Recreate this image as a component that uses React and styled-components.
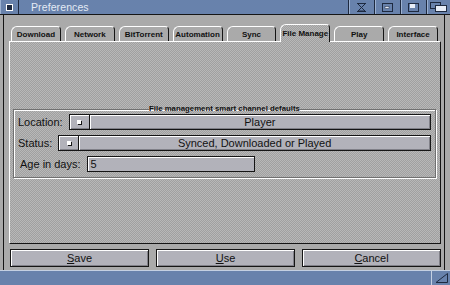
import React from "react";
import styled, { createGlobalStyle } from "styled-components";

const GRAY = "#aaaaaa";
const FACE = "#b2b2ba";
const BLUE = "#6882ac";
const DARK = "#151515";
const SHADOW = "#707070";
const SHINE = "#ffffff";
const DITHER = `repeating-conic-gradient(#a0a0a0 0 25%, #b8b8b8 0 50%) 0 0 / 2px 2px`;

const GlobalStyle = createGlobalStyle`
  html, body { margin: 0; padding: 0; background: ${GRAY}; }
  body { font-family: "Liberation Sans", Arial, sans-serif; }
`;

const Window = styled.div`
  width: 450px;
  height: 285px;
  display: flex;
  flex-direction: column;
  background: ${GRAY};
  overflow: hidden;
`;

const TitleBar = styled.div`
  height: 14px;
  display: flex;
  align-items: stretch;
  background: ${BLUE};
  border-bottom: 1px solid ${DARK};
`;

const Gadget = styled.div`
  width: ${(p) => p.$w}px;
  display: flex;
  align-items: center;
  justify-content: center;
  border-left: ${(p) => (p.$first ? "none" : `1px solid #1e2a40`)};
  border-right: ${(p) => (p.$first ? `1px solid #1e2a40` : "none")};
  box-shadow: inset 1px 0 0 #9db2d2;
`;

const Title = styled.div`
  flex: 1;
  padding-left: 12px;
  font-size: 10.5px;
  line-height: 14px;
  color: #e4ebf5;
  letter-spacing: 0.1px;
`;

const Body = styled.div`
  flex: 1;
  display: flex;
  min-height: 0;
`;

const SideBorder = styled.div`
  width: ${(p) => p.$w}px;
  background: ${GRAY};
  border-${(p) => (p.$right ? "left" : "right")}: 1px solid ${DARK};
`;

const Inner = styled.div`
  flex: 1;
  display: flex;
  flex-direction: column;
  padding: 10px 3px 3px 5px;
  background: ${GRAY};
  min-width: 0;
`;

const TabRow = styled.div`
  height: 16px;
  display: flex;
  align-items: flex-end;
  gap: 4px;
  padding: 0 3px 0 2px;
  position: relative;
  z-index: 1;
`;

const Tab = styled.div`
  flex: 1;
  height: ${(p) => (p.$active ? 18 : 15)}px;
  margin-bottom: ${(p) => (p.$active ? -1 : 0)}px;
  box-sizing: border-box;
  border-top: 1px solid ${SHINE};
  border-left: 1px solid ${SHINE};
  border-right: 1px solid ${DARK};
  border-radius: 6px 4px 0 0;
  background: ${(p) => (p.$active ? DITHER : GRAY)};
  display: flex;
  align-items: center;
  justify-content: center;
  font-size: 8px;
  font-weight: bold;
  color: #111;
  white-space: nowrap;
  overflow: hidden;
  padding-top: ${(p) => (p.$active ? 0 : 1)}px;
`;

const Panel = styled.div`
  flex: 1;
  display: flex;
  flex-direction: column;
  justify-content: center;
  background: ${DITHER};
  border-top: 1px solid ${SHINE};
  border-left: 1px solid ${SHINE};
  border-right: 1px solid ${DARK};
  border-bottom: 1px solid ${DARK};
  padding: 0 4px 2px 3px;
`;

const Group = styled.fieldset`
  margin: 0;
  padding: 1px 4px 5px 4px;
  border: 1px solid ${SHADOW};
  box-shadow: inset 1px 1px 0 ${SHINE}, 1px 1px 0 ${SHINE};
  display: flex;
  flex-direction: column;
  gap: 5px;
  min-width: 0;
`;

const Legend = styled.legend`
  margin: 0 auto;
  padding: 0;
  font-size: 7.8px;
  font-weight: bold;
  color: #111;
  line-height: 8px;
`;

const Row = styled.div`
  display: flex;
  align-items: center;
  height: 16px;
  padding-left: ${(p) => p.$indent || 0}px;
`;

const Label = styled.span`
  font-size: 11px;
  color: #111;
  margin-right: 6px;
`;

const Cycle = styled.div`
  flex: 1;
  height: 16px;
  box-sizing: border-box;
  border: 1px solid ${DARK};
  box-shadow: inset 1px 1px 0 ${SHINE}, inset -1px -1px 0 #808088;
  background: ${FACE};
  display: flex;
  align-items: center;
`;

const CycleKnob = styled.div`
  width: 19px;
  height: 100%;
  display: flex;
  align-items: center;
  justify-content: center;
  border-right: 1px solid ${DARK};
  box-shadow: 1px 0 0 ${SHINE};
`;

const Dot = styled.div`
  width: 4px;
  height: 4px;
  background: ${SHINE};
  box-shadow: 1px 1px 0 ${DARK};
`;

const CycleText = styled.div`
  flex: 1;
  text-align: center;
  font-size: 11px;
  color: #111;
`;

const StringBox = styled.div`
  width: 168px;
  height: 16px;
  box-sizing: border-box;
  border: 1px solid ${DARK};
  box-shadow: inset 1px 1px 0 ${SHINE};
  background: ${FACE};
  font-size: 11px;
  line-height: 14px;
  padding-left: 3px;
  color: #111;
`;

const ButtonRow = styled.div`
  display: flex;
  gap: 7px;
  margin-top: 5px;
  padding: 0 0 0 1px;
`;

const Button = styled.div`
  flex: 1;
  height: 18px;
  box-sizing: border-box;
  border: 1px solid ${DARK};
  box-shadow: inset 1px 1px 0 ${SHINE}, inset -1px -1px 0 #808088;
  background: ${FACE};
  text-align: center;
  font-size: 11px;
  line-height: 16px;
  color: #111;
  u { text-decoration: underline; text-underline-offset: 1px; }
`;

const BottomBar = styled.div`
  height: 14px;
  display: flex;
  justify-content: flex-end;
  background: ${BLUE};
  border-top: 1px solid #c4d0e2;
`;

const SizeGadget = styled.div`
  width: 18px;
  display: flex;
  align-items: center;
  justify-content: center;
  border-left: 1px solid #c4d0e2;
`;

const tabs = ["Download", "Network", "BitTorrent", "Automation", "Sync", "File Manage", "Play", "Interface"];

export default function App() {
  return (
    <Window>
      <GlobalStyle />
      <TitleBar>
        <Gadget $w={18} $first>
          <svg width="7" height="7" viewBox="0 0 7 7">
            <rect x="0.5" y="0.5" width="6" height="6" fill="#1e2a40" stroke="#ffffff" />
          </svg>
        </Gadget>
        <Title>Preferences</Title>
        <Gadget $w={25}>
          <svg width="11" height="9" viewBox="0 0 11 9">
            <path d="M1 0.5h9M1 8.5h9M2 1l7 7M9 1l-7 7M3 8h5" stroke="#1e2a40" fill="none" />
          </svg>
        </Gadget>
        <Gadget $w={25}>
          <svg width="11" height="9" viewBox="0 0 11 9">
            <rect x="0.5" y="0.5" width="10" height="8" fill="none" stroke="#1e2a40" />
            <rect x="3" y="3.5" width="4" height="2" fill="#e8eef8" stroke="#1e2a40" strokeWidth="0.5" />
          </svg>
        </Gadget>
        <Gadget $w={25}>
          <svg width="11" height="9" viewBox="0 0 11 9">
            <rect x="0.5" y="0.5" width="10" height="8" fill="none" stroke="#1e2a40" />
            <rect x="2" y="1" width="5" height="4" fill="#e8eef8" />
          </svg>
        </Gadget>
        <Gadget $w={23}>
          <svg width="17" height="10" viewBox="0 0 17 10">
            <rect x="0.5" y="0.5" width="10" height="6" fill={BLUE} stroke="#1e2a40" />
            <rect x="5.5" y="3.5" width="11" height="6" fill="#e8eef8" stroke="#1e2a40" />
          </svg>
        </Gadget>
      </TitleBar>
      <Body>
        <SideBorder $w={3} />
        <Inner>
          <TabRow>
            {tabs.map((t) => (
              <Tab key={t} $active={t === "File Manage"}>
                {t}
              </Tab>
            ))}
          </TabRow>
          <Panel>
            <Group>
              <Legend>File management smart channel defaults</Legend>
              <Row>
                <Label>Location:</Label>
                <Cycle>
                  <CycleKnob>
                    <Dot />
                  </CycleKnob>
                  <CycleText>Player</CycleText>
                </Cycle>
              </Row>
              <Row>
                <Label>Status:</Label>
                <Cycle>
                  <CycleKnob>
                    <Dot />
                  </CycleKnob>
                  <CycleText>Synced, Downloaded or Played</CycleText>
                </Cycle>
              </Row>
              <Row $indent={2}>
                <Label>Age in days:</Label>
                <StringBox>5</StringBox>
              </Row>
            </Group>
          </Panel>
          <ButtonRow>
            <Button>
              <u>S</u>ave
            </Button>
            <Button>
              <u>U</u>se
            </Button>
            <Button>
              <u>C</u>ancel
            </Button>
          </ButtonRow>
        </Inner>
        <SideBorder $w={5} $right />
      </Body>
      <BottomBar>
        <SizeGadget>
          <svg width="13" height="10" viewBox="0 0 13 10">
            <path d="M1 9.5h11.5V0.5z" fill="none" stroke="#1e2a40" />
          </svg>
        </SizeGadget>
      </BottomBar>
    </Window>
  );
}
